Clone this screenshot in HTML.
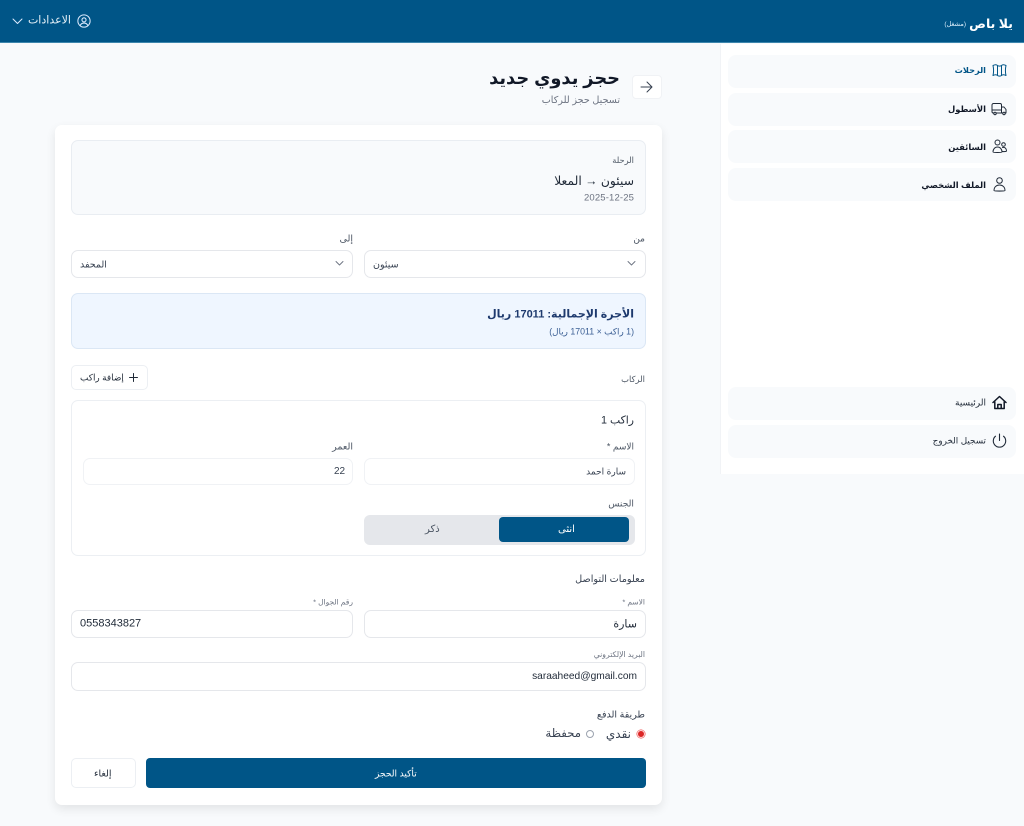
<!DOCTYPE html>
<html lang="ar" dir="rtl">
<head>
<meta charset="utf-8">
<title>حجز يدوي جديد</title>
<style>
html,body{margin:0;padding:0}
body{width:1024px;height:826px;position:relative;overflow:hidden;background:#f8fafc;font-family:"Liberation Sans","DejaVu Sans",sans-serif;color:#1f2937}
.b{position:absolute;box-sizing:border-box}
.t{position:absolute;white-space:nowrap;line-height:1;direction:rtl;transform:translateY(-50%)}
.l{direction:ltr}
.in{background:#fff;border:1px solid #e5e7eb;border-radius:7px}
.nav{position:absolute;left:728px;width:288px;height:33px;background:#f8fafc;border-radius:8px}
svg{position:absolute;fill:none;stroke:currentColor;stroke-linecap:round;stroke-linejoin:round}
</style>
</head>
<body>
<div class="b" style="left:0;top:0;width:1024px;height:43px;background:#005587;border-bottom:1px solid #3d86ad"></div>
<div class="t" style="right:11px;top:24px;font-size:12.500px;font-weight:700;color:#fff">يلا باص</div>
<div class="t" style="right:58px;top:25px;font-size:6.500px;color:#e0f2fe">(مشغل)</div>
<svg style="left:77px;top:14px;color:#dbeafe" width="14" height="14" viewBox="0 0 24 24" stroke-width="1.800"><circle cx="12" cy="12" r="10.500"/><circle cx="12" cy="10" r="3.500"/><path d="M5.500 19.500c1.500-3 3.800-4 6.500-4s5 1 6.500 4"/></svg>
<div class="t" style="right:953px;top:21px;font-size:11px;color:#e5f0f7">الاعدادات</div>
<svg style="left:12px;top:17px;color:#dbeafe" width="11" height="9" viewBox="0 0 11 9" stroke-width="1"><path d="M1 2l4.500 4.500L10 2"/></svg>

<div class="b" style="left:720px;top:44px;width:304px;height:430px;background:#fff;border-left:1px solid #f1f3f6"></div>
<div class="nav" style="top:55px"></div>
<div class="nav" style="top:93px"></div>
<div class="nav" style="top:130px"></div>
<div class="nav" style="top:168px"></div>
<div class="nav" style="top:387px"></div>
<div class="nav" style="top:425px"></div>
<div class="t" style="right:38px;top:71px;font-size:8.200px;font-weight:700;color:#005587">الرحلات</div>
<div class="t" style="right:38px;top:109px;font-size:8.400px;font-weight:700;color:#111827">الأسطول</div>
<div class="t" style="right:38px;top:147px;font-size:8.400px;font-weight:700;color:#111827">السائقين</div>
<div class="t" style="right:38px;top:185px;font-size:8.400px;font-weight:700;color:#111827">الملف الشخصي</div>
<div class="t" style="right:38px;top:403px;font-size:9px;color:#1f2937">الرئيسية</div>
<div class="t" style="right:38px;top:441px;font-size:8.800px;color:#1f2937">تسجيل الخروج</div>
<svg style="left:992px;top:63px;color:#005587" width="15" height="15" viewBox="0 0 15 15" stroke-width="1"><path d="M1 2.500c2-1 3.500-1 4.500 0 1 .8 3 .8 4 0 1-1 2.500-1 4.500 0-.7 3-.7 7 0 10-2-1-3.500-1-4.500 0-1 .8-3 .8-4 0-1-1-2.500-1-4.500 0 .7-3 .7-7 0-10zM5.500 3v9M9.500 3v9"/></svg>
<svg style="left:991px;top:102px;color:#1f2937" width="16" height="14" viewBox="0 0 16 14" stroke-width="1"><path d="M3 11H2a1.500 1.500 0 0 1-1-1.500V3a1.500 1.500 0 0 1 1.500-1.500H9A1.500 1.500 0 0 1 10.500 3v8M10.500 5H13l2 2.500V11h-1M1 8h9.500M5 11h6.500"/><circle cx="4" cy="11.500" r="1.200"/><circle cx="13" cy="11.500" r="1.200"/></svg>
<svg style="left:992px;top:139px;color:#1f2937" width="15" height="15" viewBox="0 0 15 15" stroke-width="1"><circle cx="5.500" cy="3.500" r="2.500"/><circle cx="11.500" cy="5.500" r="1.800"/><path d="M1 13c0-3 2-5 4.500-5S10 10 10 13c0 .6-9 .6-9 0zM10.500 8.500c2.500-.5 4 1 4 3.500 0 .5-2 .7-4 .5"/></svg>
<svg style="left:993px;top:177px;color:#1f2937" width="13" height="15" viewBox="0 0 13 15" stroke-width="1"><circle cx="6.500" cy="3.500" r="2.800"/><path d="M1 13.500c0-3.500 2.500-5.500 5.500-5.500s5.500 2 5.500 5.500c0 .8-11 .8-11 0z"/></svg>
<svg style="left:992px;top:395px;color:#111827" width="15" height="15" viewBox="0 0 15 15" stroke-width="1.500"><path d="M1 7.500L7.500 1.500 14 7.500M2.800 6.500V13.500h9.400V6.500M5.800 13.500V9.500h3.400v4"/></svg>
<svg style="left:992px;top:433px;color:#1f2937" width="15" height="15" viewBox="0 0 15 15" stroke-width="1.100"><path d="M7.500 1v6.500M3.500 3.200a6.200 6.200 0 1 0 8 0"/></svg>

<div class="t" style="right:404px;top:79px;font-size:17.800px;font-weight:700;color:#111827">حجز يدوي جديد</div>
<div class="t" style="right:404px;top:101px;font-size:9.600px;color:#6b7280">تسجيل حجز للركاب</div>
<div class="b" style="left:632px;top:75px;width:30px;height:24px;background:#fff;border:1px solid #f0f2f5;border-radius:4px"></div>
<svg style="left:640px;top:81px;color:#374151" width="13" height="12" viewBox="0 0 13 12" stroke-width="1"><path d="M1 6h11M7 1l5 5-5 5"/></svg>

<div class="b" style="left:55px;top:125px;width:607px;height:680px;background:#fff;border-radius:7px;box-shadow:0 4px 10px rgba(0,0,0,.09)"></div>

<div class="b" style="left:71px;top:140px;width:575px;height:75px;background:#f8fafc;border:1px solid #e9edf2;border-radius:7px"></div>
<div class="t" style="right:390px;top:160px;font-size:8.300px;color:#4b5563">الرحلة</div>
<div class="t" style="right:390px;top:181px;font-size:12.300px;color:#1f2937">سيئون → المعلا</div>
<div class="t l" style="left:584px;top:198px;font-size:9.500px;color:#6b7280;letter-spacing:.15px">2025-12-25</div>

<div class="t" style="right:379px;top:239px;font-size:9px;color:#4b5563">من</div>
<div class="t" style="right:671px;top:239px;font-size:9.500px;color:#4b5563">إلى</div>
<div class="b in" style="left:364px;top:250px;width:282px;height:28px"></div>
<div class="b in" style="left:71px;top:250px;width:282px;height:28px"></div>
<div class="t" style="left:373px;top:265px;font-size:9.500px;color:#374151">سيئون</div>
<div class="t" style="left:80px;top:265px;font-size:9.500px;color:#374151">المحفد</div>
<svg style="left:627px;top:260px;color:#6b7280" width="9" height="7" viewBox="0 0 9 7" stroke-width=".9"><path d="M1 1.500l3.500 3.500L8 1.500"/></svg>
<svg style="left:335px;top:260px;color:#6b7280" width="9" height="7" viewBox="0 0 9 7" stroke-width=".9"><path d="M1 1.500l3.500 3.500L8 1.500"/></svg>

<div class="b" style="left:71px;top:293px;width:575px;height:56px;background:#eff6ff;border:1px solid #dbe7f5;border-radius:7px"></div>
<div class="t" style="right:390px;top:315px;font-size:11px;font-weight:700;color:#1e3a6e">الأجرة الإجمالية: 17011 ريال</div>
<div class="t" style="right:390px;top:332px;font-size:8.800px;color:#3b5f94">(1 راكب × 17011 ريال)</div>

<div class="t" style="right:379px;top:379px;font-size:8.400px;color:#4b5563">الركاب</div>
<div class="b" style="left:71px;top:365px;width:77px;height:25px;background:#fff;border:1px solid #eceff3;border-radius:5px"></div>
<svg style="left:129px;top:373px;color:#1f2937" width="9" height="9" viewBox="0 0 9 9" stroke-width="1"><path d="M4.500 .5v8M.5 4.500h8"/></svg>
<div class="t" style="left:80px;top:378px;font-size:8.900px;color:#1f2937">إضافة راكب</div>

<div class="b" style="left:71px;top:400px;width:575px;height:156px;background:#fff;border:1px solid #eceff3;border-radius:7px"></div>
<div class="t" style="right:390px;top:421px;font-size:10.800px;color:#1f2937">راكب 1</div>
<div class="t" style="right:390px;top:447px;font-size:9px;color:#4b5563">الاسم *</div>
<div class="t" style="right:671px;top:447px;font-size:9.500px;color:#4b5563">العمر</div>
<div class="b in" style="left:364px;top:458px;width:271px;height:27px;border-color:#f0f2f5"></div>
<div class="b in" style="left:83px;top:458px;width:270px;height:27px;border-color:#f0f2f5"></div>
<div class="t" style="right:398px;top:472px;font-size:9px;color:#374151">سارة احمد</div>
<div class="t l" style="left:334px;top:472px;font-size:10px;color:#374151">22</div>
<div class="t" style="right:390px;top:504px;font-size:9.200px;color:#4b5563">الجنس</div>
<div class="b" style="left:364px;top:515px;width:271px;height:30px;background:#e5e7eb;border-radius:6px"></div>
<div class="b" style="left:499px;top:517px;width:130px;height:25px;background:#005587;border-radius:4px"></div>
<div class="t" style="left:558px;top:530px;font-size:10px;color:#fff">انثى</div>
<div class="t" style="left:425px;top:530px;font-size:10px;color:#4b5563">ذكر</div>

<div class="t" style="right:379px;top:580px;font-size:9.700px;color:#374151">معلومات التواصل</div>
<div class="t" style="right:379px;top:602px;font-size:7.500px;color:#6b7280">الاسم *</div>
<div class="t" style="right:671px;top:602px;font-size:7.500px;color:#6b7280">رقم الجوال *</div>
<div class="b in" style="left:364px;top:610px;width:282px;height:28px"></div>
<div class="b in" style="left:71px;top:610px;width:282px;height:28px"></div>
<div class="t" style="right:387px;top:625px;font-size:11px;color:#1f2937">سارة</div>
<div class="t l" style="left:80px;top:624px;font-size:11px;color:#1f2937">0558343827</div>
<div class="t" style="right:379px;top:655px;font-size:7.700px;color:#6b7280">البريد الإلكتروني</div>
<div class="b in" style="left:71px;top:662px;width:575px;height:29px"></div>
<div class="t l" style="right:387px;top:677px;font-size:10.200px;color:#1f2937">saraaheed@gmail.com</div>

<div class="t" style="right:379px;top:715px;font-size:9.500px;color:#374151">طريقة الدفع</div>
<div class="b" style="left:637px;top:730px;width:8px;height:8px;border-radius:50%;background:#dc2626;border:1.500px solid #fbd5d5;box-shadow:0 0 0 .5px #ef4444"></div>
<div class="t" style="right:393px;top:734px;font-size:12px;color:#374151">نقدي</div>
<div class="b" style="left:586px;top:730px;width:8px;height:8px;border-radius:50%;background:#fff;border:1px solid #9ca3af"></div>
<div class="t" style="right:443px;top:734px;font-size:11.700px;color:#374151">محفظة</div>

<div class="b" style="left:146px;top:758px;width:500px;height:30px;background:#005587;border-radius:4px"></div>
<div class="t" style="left:375px;top:774px;font-size:9.100px;color:#fff">تأكيد الحجز</div>
<div class="b" style="left:71px;top:758px;width:65px;height:30px;background:#fff;border:1px solid #eceff3;border-radius:5px"></div>
<div class="t" style="left:94px;top:774px;font-size:9.500px;color:#1f2937">إلغاء</div>
</body>
</html>
